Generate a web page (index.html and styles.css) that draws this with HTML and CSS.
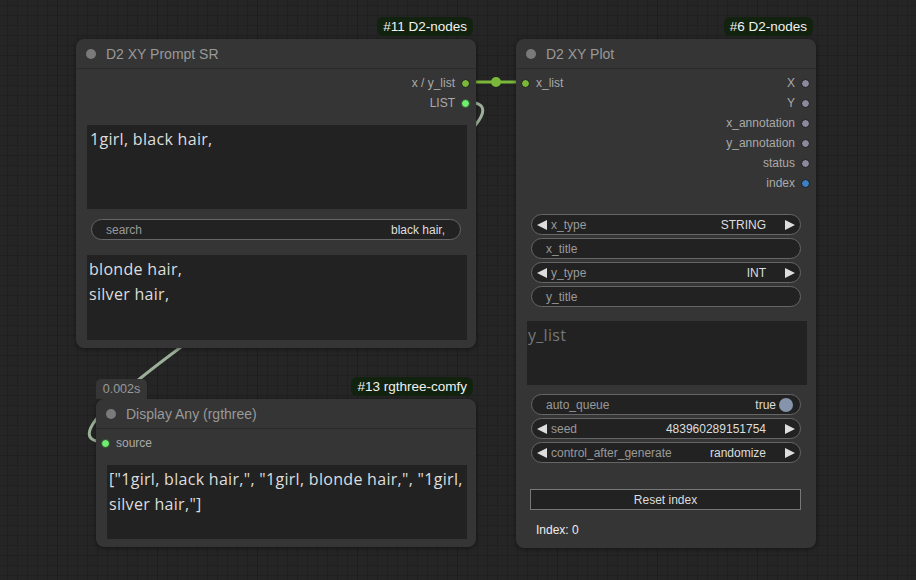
FILE: index.html
```html
<!DOCTYPE html>
<html>
<head>
<meta charset="utf-8">
<link rel="stylesheet" href="styles.css">
</head>
<body>
<div class="canvas">
  <svg class="links" width="916" height="580" viewBox="0 0 916 580">
    <path d="M466,102 C590,102 -18,442 106,442" fill="none" stroke="#9bb098" stroke-width="3"/>
    <path d="M466,82 L526,82" fill="none" stroke="#7ab83a" stroke-width="3"/>
    <circle cx="496" cy="82" r="5" fill="#7ab83a"/>
  </svg>

  <div class="node node-prompt">
    <div class="badge">#11 D2-nodes</div>
    <div class="title"><span class="tdot"></span><span>D2 XY Prompt SR</span></div>
    <div class="body">
      <div class="slots">
        <div class="col"></div>
        <div class="col outputs">
          <div class="slot out"><span>x / y_list</span><span class="sdot lime"></span></div>
          <div class="slot out"><span>LIST</span><span class="sdot green"></span></div>
        </div>
      </div>
      <div class="textarea ta-prompt">1girl, black hair,</div>
      <div class="widget text w-search"><span class="label">search</span><span class="value">black hair,</span></div>
      <div class="textarea ta-replace">blonde hair,
silver hair,</div>
    </div>
  </div>

  <div class="node node-display">
    <div class="timing">0.002s</div>
    <div class="badge badge-wide">#13 rgthree-comfy</div>
    <div class="title"><span class="tdot"></span><span>Display Any (rgthree)</span></div>
    <div class="body">
      <div class="slot in"><span class="sdot green"></span><span>source</span></div>
      <div class="textarea ta-display">["1girl, black hair,", "1girl, blonde hair,", "1girl, silver hair,"]</div>
    </div>
  </div>

  <div class="node node-plot">
    <div class="badge">#6 D2-nodes</div>
    <div class="title"><span class="tdot"></span><span>D2 XY Plot</span></div>
    <div class="body">
      <div class="slots">
        <div class="col inputs">
          <div class="slot in"><span class="sdot lime"></span><span>x_list</span></div>
        </div>
        <div class="col outputs">
          <div class="slot out"><span>X</span><span class="sdot grey"></span></div>
          <div class="slot out"><span>Y</span><span class="sdot grey"></span></div>
          <div class="slot out"><span>x_annotation</span><span class="sdot grey"></span></div>
          <div class="slot out"><span>y_annotation</span><span class="sdot grey"></span></div>
          <div class="slot out"><span>status</span><span class="sdot grey"></span></div>
          <div class="slot out"><span>index</span><span class="sdot blue"></span></div>
        </div>
      </div>
      <div class="widgets w-first">
        <div class="widget combo"><span class="arrow left"></span><span class="label">x_type</span><span class="value">STRING</span><span class="arrow right"></span></div>
        <div class="widget text"><span class="label">x_title</span><span class="value"></span></div>
        <div class="widget combo"><span class="arrow left"></span><span class="label">y_type</span><span class="value">INT</span><span class="arrow right"></span></div>
        <div class="widget text"><span class="label">y_title</span><span class="value"></span></div>
      </div>
      <div class="textarea ta-ylist"><span class="placeholder">y_list</span></div>
      <div class="widgets w-second">
        <div class="widget toggle"><span class="label">auto_queue</span><span class="value">true</span><span class="knob"></span></div>
        <div class="widget combo"><span class="arrow left"></span><span class="label">seed</span><span class="value">483960289151754</span><span class="arrow right"></span></div>
        <div class="widget combo"><span class="arrow left"></span><span class="label">control_after_generate</span><span class="value">randomize</span><span class="arrow right"></span></div>
      </div>
      <div class="button">Reset index</div>
      <div class="index-text">Index: 0</div>
    </div>
  </div>
</div>
</body>
</html>
```

FILE: styles.css
```css
* { box-sizing: border-box; }

html, body {
  margin: 0;
  padding: 0;
}

body {
  width: 916px;
  height: 580px;
  overflow: hidden;
  font-family: "Liberation Sans", Arial, sans-serif;
  background-color: #252525;
  background-image:
    linear-gradient(90deg, #1d1d1d 1px, transparent 1px),
    linear-gradient(#1f1f1f 1px, transparent 1px),
    linear-gradient(90deg, #202020 1px, transparent 1px),
    linear-gradient(#202020 1px, transparent 1px);
  background-size: 100px 100px, 100px 100px, 10px 10px, 10px 10px;
  background-position: 57px 0, 0 55px, 7px 5px, 7px 5px;
}

.canvas {
  position: relative;
  width: 916px;
  height: 580px;
}

.links {
  position: absolute;
  left: 0;
  top: 0;
}

.node {
  position: absolute;
  background: #353535;
  border-radius: 8px;
  box-shadow: 0 1px 4px rgba(0, 0, 0, 0.45);
  display: flex;
  flex-direction: column;
}

.node-prompt { left: 76px; top: 39px; width: 400px; height: 309px; }
.node-display { left: 96px; top: 399px; width: 380px; height: 148px; }
.node-plot { left: 516px; top: 39px; width: 300px; height: 509px; }

.badge {
  position: absolute;
  right: 3px;
  bottom: calc(100% + 3px);
  height: 19px;
  padding: 0 6px;
  border-radius: 6px;
  background: #11220f;
  color: #f2f2f2;
  font-size: 13.5px;
  line-height: 19px;
  white-space: nowrap;
}

.timing {
  position: absolute;
  left: 0;
  bottom: 100%;
  width: 51px;
  height: 20px;
  border-radius: 5px 5px 0 0;
  background: #353535;
  color: #999;
  font-size: 12.5px;
  line-height: 20px;
  text-align: center;
}

.title {
  height: 30px;
  display: flex;
  align-items: center;
  padding-left: 10px;
  border-bottom: 1px solid #2b2b2b;
  color: #999;
  font-size: 14px;
}

.tdot {
  width: 10px;
  height: 10px;
  border-radius: 50%;
  background: #7a7a7a;
  margin-right: 10px;
}

.body {
  display: flex;
  flex-direction: column;
  padding-top: 4px;
}

.slots {
  display: flex;
  justify-content: space-between;
}

.col {
  display: flex;
  flex-direction: column;
}

.slot {
  height: 20px;
  display: flex;
  align-items: center;
  color: #aaa;
  font-size: 12px;
  white-space: nowrap;
}

.slot.out {
  justify-content: flex-end;
  padding-right: 6px;
  gap: 6px;
}

.slot.in {
  padding-left: 5px;
  gap: 6px;
}

.sdot {
  width: 9px;
  height: 9px;
  border-radius: 50%;
  border: 1px solid #1a1a1a;
}

.sdot.lime { background: #7ab83a; }
.sdot.green { background: #6ef06e; border-color: #2d4a2d; }
.sdot.grey { background: #8a8a9c; }
.sdot.blue { background: #3b7fc4; }

.textarea {
  background: #222;
  color: #ddd;
  font-family: "Open Sans", sans-serif;
  font-size: 16px;
  letter-spacing: 0.3px;
  line-height: 24.6px;
  padding: 2px 2px;
  white-space: pre-wrap;
  overflow: hidden;
}

.ta-prompt { margin: 12px 9px 0 11px; height: 84px; padding-left: 3px; }
.ta-replace { margin: 15px 9px 0 11px; height: 85px; }
.ta-display { margin: 12px 9px 0 11px; height: 74px; padding-right: 0; }
.ta-ylist { margin: 14px 9px 0 11px; height: 64px; padding-left: 1px; }

.placeholder { color: #777; }

.widget {
  height: 21px;
  display: flex;
  align-items: center;
  border: 1px solid #666;
  border-radius: 11px;
  background: #222;
  font-size: 12px;
  white-space: nowrap;
}

.widget .label { color: #999; }
.widget .value { color: #ddd; flex: 1; text-align: right; }

.widget.text { padding: 0 15px 0 14px; }

.w-search { margin: 10px 15px 0 15px; }

.widget.combo { padding: 0 5px 0 5px; }
.widget.combo .label { margin-left: 4px; }
.widget.combo .value { margin-right: 19px; }

.widget.toggle { padding: 0 7px 0 14px; }
.widget.toggle .knob {
  width: 14px;
  height: 14px;
  border-radius: 50%;
  background: #8594ab;
  margin-left: 3px;
}

.arrow {
  width: 0;
  height: 0;
  border-top: 5px solid transparent;
  border-bottom: 5px solid transparent;
}

.arrow.left { border-right: 10px solid #ddd; }
.arrow.right { border-left: 10px solid #ddd; }

.widgets {
  display: flex;
  flex-direction: column;
  gap: 3px;
  margin: 0 15px;
}

.w-first { margin-top: 21px; }
.w-second { margin-top: 9px; }

.button {
  margin: 26px 15px 0 14px;
  height: 21px;
  border: 1px solid #777;
  background: #222;
  color: #ddd;
  font-size: 12px;
  display: flex;
  align-items: center;
  justify-content: center;
}

.index-text {
  margin-top: 12px;
  padding-left: 20px;
  color: #eee;
  font-size: 12px;
  line-height: 16px;
}
```
